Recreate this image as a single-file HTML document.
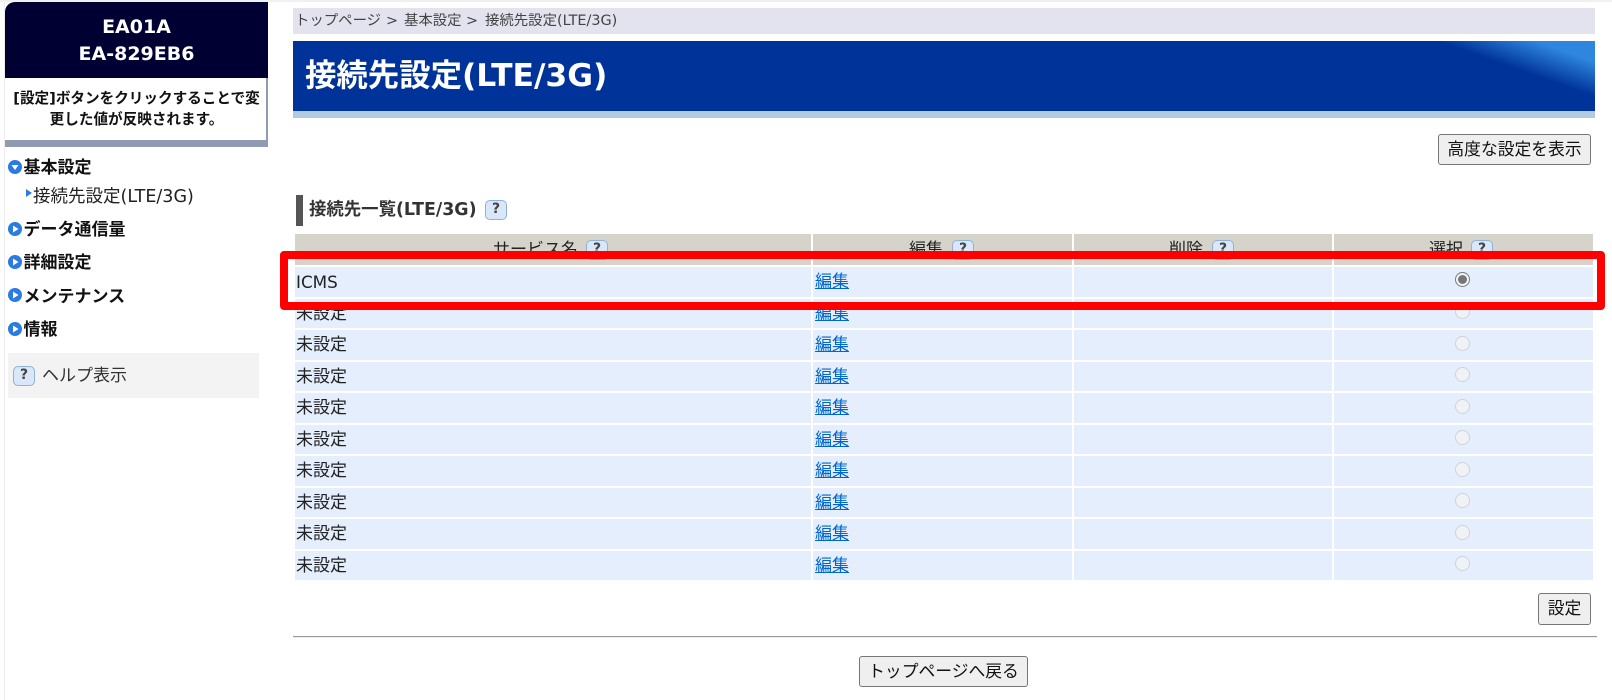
<!DOCTYPE html>
<html lang="ja">
<head>
<meta charset="utf-8">
<title>接続先設定(LTE/3G)</title>
<style>
html,body{margin:0;padding:0;background:#fff}
body{width:1612px;height:700px;position:relative;overflow:hidden;font-family:"DejaVu Sans","Noto Sans CJK JP",sans-serif;color:#222}
div,a,span,svg{position:absolute;display:block;white-space:nowrap}
.box{box-sizing:border-box}
.nav{left:23.5px;font-size:17px;font-weight:700;line-height:24px;color:#111}
.ic{left:8px;width:14px;height:14px}
.hdr{top:234px;height:31px;background:#d6d3cb}
.cell{height:29.5px;background:#e4eefd}
.t{font-size:17px;line-height:24px;color:#222}
.lnk{font-size:17px;line-height:24px;color:#0066cc;text-decoration:underline;left:815px}
.r{left:1454.5px;width:15px;height:15px;box-sizing:border-box;border:1.5px solid #d2d2d2;border-radius:50%;background:#eff3f8}
.btn{box-sizing:border-box;background:#efefef;border:1px solid #767676;border-radius:3px;font-size:16.8px;color:#111;text-align:center}
.q{width:22px;height:20px;box-sizing:border-box;background:#d9e7f8;border:1.5px solid #8fb2d8;border-radius:5px;color:#444;font-size:14px;font-weight:700;line-height:17px;text-align:center}
</style>
</head>
<body>
<div style="left:0;top:0;width:1612px;height:2px;background:#f0f0f0"></div>
<div style="left:4px;top:2px;width:1px;height:698px;background:#ececec"></div>

<!-- sidebar header -->
<div style="left:5px;top:2px;width:263px;height:76px;background:#000033;border-radius:10px 0 0 0"></div>
<div style="left:5px;top:14px;width:263px;text-align:center;color:#fff;font-size:19px;font-weight:700;line-height:26px">EA01A</div>
<div style="left:5px;top:41px;width:263px;text-align:center;color:#fff;font-size:19px;font-weight:700;line-height:26px">EA-829EB6</div>
<div style="left:5px;top:78px;width:263px;height:69px;background:#8f9bb3"></div>
<div style="left:5px;top:78px;width:261px;height:62px;background:#fff"></div>
<div style="left:5px;top:88px;width:263px;text-align:center;font-size:14.6px;font-weight:700;line-height:22px;color:#111">[設定]ボタンをクリックすることで変</div>
<div style="left:5px;top:109px;width:263px;text-align:center;font-size:14.6px;font-weight:700;line-height:22px;color:#111">更した値が反映されます。</div>

<!-- nav -->
<svg class="ic" style="top:160px" viewBox="0 0 14 14"><circle cx="7" cy="7" r="7" fill="#2b7be0"/><path d="M3.5 5H10.5L7 10Z" fill="#fff"/></svg>
<div class="nav" style="top:156px">基本設定</div>
<svg style="left:26px;top:189px;width:6px;height:8px" viewBox="0 0 6 8"><path d="M0 0L6 4L0 8Z" fill="#2b7be0"/></svg>
<div class="t" style="left:33px;top:185px;color:#222;font-size:17.5px">接続先設定(LTE/3G)</div>
<svg class="ic" style="top:222px" viewBox="0 0 14 14"><circle cx="7" cy="7" r="7" fill="#2b7be0"/><path d="M5 3.5V10.5L10.5 7Z" fill="#fff"/></svg>
<div class="nav" style="top:218px">データ通信量</div>
<svg class="ic" style="top:255px" viewBox="0 0 14 14"><circle cx="7" cy="7" r="7" fill="#2b7be0"/><path d="M5 3.5V10.5L10.5 7Z" fill="#fff"/></svg>
<div class="nav" style="top:251px">詳細設定</div>
<svg class="ic" style="top:288px" viewBox="0 0 14 14"><circle cx="7" cy="7" r="7" fill="#2b7be0"/><path d="M5 3.5V10.5L10.5 7Z" fill="#fff"/></svg>
<div class="nav" style="top:285px">メンテナンス</div>
<svg class="ic" style="top:322px" viewBox="0 0 14 14"><circle cx="7" cy="7" r="7" fill="#2b7be0"/><path d="M5 3.5V10.5L10.5 7Z" fill="#fff"/></svg>
<div class="nav" style="top:318px">情報</div>
<div style="left:8px;top:353px;width:251px;height:45px;background:#f3f3f3"></div>
<div class="q" style="left:13px;top:366px">?</div>
<div class="t" style="left:42px;top:364px;color:#333">ヘルプ表示</div>

<!-- breadcrumb -->
<div style="left:293px;top:8px;width:1302px;height:26px;background:#e3e3ef"></div>
<div style="left:295px;top:10px;font-size:14.4px;line-height:22px;color:#444">トップページ</div>
<div style="left:386px;top:10px;font-size:14.4px;line-height:22px;color:#444">&gt;</div>
<div style="left:404px;top:10px;font-size:14.4px;line-height:22px;color:#444">基本設定</div>
<div style="left:466px;top:10px;font-size:14.4px;line-height:22px;color:#444">&gt;</div>
<div style="left:485px;top:10px;font-size:14.4px;line-height:22px;color:#444">接続先設定(LTE/3G)</div>

<!-- banner -->
<div style="left:293px;top:41px;width:1302px;height:70px;background:linear-gradient(19.5deg,#003399 89.5%,#2e86de 96%)"></div>
<div style="left:293px;top:111px;width:1302px;height:7px;background:#b3cbe0"></div>
<div style="left:305px;top:55px;font-size:31.4px;font-weight:700;line-height:42px;color:#fff">接続先設定(LTE/3G)</div>

<div class="btn" style="left:1438px;top:134px;width:153px;height:31px;line-height:29px">高度な設定を表示</div>

<!-- section -->
<div style="left:296px;top:195px;width:7px;height:31px;background:#555"></div>
<div style="left:309px;top:198px;font-size:17.4px;font-weight:700;line-height:24px;color:#333">接続先一覧(LTE/3G)</div>
<div class="q" style="left:485px;top:200px">?</div>

<!-- table header -->
<div class="hdr" style="left:295px;width:516px"></div>
<div class="hdr" style="left:813px;width:259px"></div>
<div class="hdr" style="left:1074px;width:258px"></div>
<div class="hdr" style="left:1334px;width:259px"></div>
<div class="t" style="left:493px;top:238px">サービス名</div><div class="q" style="left:586px;top:240px">?</div>
<div class="t" style="left:909px;top:238px">編集</div><div class="q" style="left:952px;top:240px">?</div>
<div class="t" style="left:1169px;top:238px">削除</div><div class="q" style="left:1212px;top:240px">?</div>
<div class="t" style="left:1429px;top:238px">選択</div><div class="q" style="left:1471px;top:240px">?</div>

<!-- rows -->
<div class="cell" style="left:295px;top:267px;width:516px"></div><div class="cell" style="left:813px;top:267px;width:259px"></div><div class="cell" style="left:1074px;top:267px;width:258px"></div><div class="cell" style="left:1334px;top:267px;width:259px"></div>
<div class="cell" style="left:295px;top:298.5px;width:516px"></div><div class="cell" style="left:813px;top:298.5px;width:259px"></div><div class="cell" style="left:1074px;top:298.5px;width:258px"></div><div class="cell" style="left:1334px;top:298.5px;width:259px"></div>
<div class="cell" style="left:295px;top:330px;width:516px"></div><div class="cell" style="left:813px;top:330px;width:259px"></div><div class="cell" style="left:1074px;top:330px;width:258px"></div><div class="cell" style="left:1334px;top:330px;width:259px"></div>
<div class="cell" style="left:295px;top:361.5px;width:516px"></div><div class="cell" style="left:813px;top:361.5px;width:259px"></div><div class="cell" style="left:1074px;top:361.5px;width:258px"></div><div class="cell" style="left:1334px;top:361.5px;width:259px"></div>
<div class="cell" style="left:295px;top:393px;width:516px"></div><div class="cell" style="left:813px;top:393px;width:259px"></div><div class="cell" style="left:1074px;top:393px;width:258px"></div><div class="cell" style="left:1334px;top:393px;width:259px"></div>
<div class="cell" style="left:295px;top:424.5px;width:516px"></div><div class="cell" style="left:813px;top:424.5px;width:259px"></div><div class="cell" style="left:1074px;top:424.5px;width:258px"></div><div class="cell" style="left:1334px;top:424.5px;width:259px"></div>
<div class="cell" style="left:295px;top:456px;width:516px"></div><div class="cell" style="left:813px;top:456px;width:259px"></div><div class="cell" style="left:1074px;top:456px;width:258px"></div><div class="cell" style="left:1334px;top:456px;width:259px"></div>
<div class="cell" style="left:295px;top:487.5px;width:516px"></div><div class="cell" style="left:813px;top:487.5px;width:259px"></div><div class="cell" style="left:1074px;top:487.5px;width:258px"></div><div class="cell" style="left:1334px;top:487.5px;width:259px"></div>
<div class="cell" style="left:295px;top:519px;width:516px"></div><div class="cell" style="left:813px;top:519px;width:259px"></div><div class="cell" style="left:1074px;top:519px;width:258px"></div><div class="cell" style="left:1334px;top:519px;width:259px"></div>
<div class="cell" style="left:295px;top:550.5px;width:516px"></div><div class="cell" style="left:813px;top:550.5px;width:259px"></div><div class="cell" style="left:1074px;top:550.5px;width:258px"></div><div class="cell" style="left:1334px;top:550.5px;width:259px"></div>

<div class="t" style="left:296px;top:270px;font-size:16.8px">ICMS</div>
<div class="t" style="left:296px;top:302px">未設定</div>
<div class="t" style="left:296px;top:333px">未設定</div>
<div class="t" style="left:296px;top:365px">未設定</div>
<div class="t" style="left:296px;top:396px">未設定</div>
<div class="t" style="left:296px;top:428px">未設定</div>
<div class="t" style="left:296px;top:459px">未設定</div>
<div class="t" style="left:296px;top:491px">未設定</div>
<div class="t" style="left:296px;top:522px">未設定</div>
<div class="t" style="left:296px;top:554px">未設定</div>

<a class="lnk" style="top:270px">編集</a>
<a class="lnk" style="top:302px">編集</a>
<a class="lnk" style="top:333px">編集</a>
<a class="lnk" style="top:365px">編集</a>
<a class="lnk" style="top:396px">編集</a>
<a class="lnk" style="top:428px">編集</a>
<a class="lnk" style="top:459px">編集</a>
<a class="lnk" style="top:491px">編集</a>
<a class="lnk" style="top:522px">編集</a>
<a class="lnk" style="top:554px">編集</a>

<div class="r" style="top:272px;border-color:#7a7a7a;background:#f2f5f9"></div>
<div style="left:1457.5px;top:275px;width:9px;height:9px;border-radius:50%;background:#777"></div>
<div class="r" style="top:304px"></div>
<div class="r" style="top:336px"></div>
<div class="r" style="top:367px"></div>
<div class="r" style="top:399px"></div>
<div class="r" style="top:430px"></div>
<div class="r" style="top:462px"></div>
<div class="r" style="top:493px"></div>
<div class="r" style="top:525px"></div>
<div class="r" style="top:556px"></div>

<!-- red highlight -->
<div class="box" style="left:280px;top:251px;width:1325px;height:59px;border:8px solid #ff0000;border-radius:4px"></div>

<!-- footer controls -->
<div class="btn" style="left:1538px;top:593px;width:53px;height:32px;line-height:29px">設定</div>
<div style="left:293px;top:636px;width:1304px;height:1px;background:#999"></div>
<div style="left:293px;top:637px;width:1304px;height:1px;background:#eee"></div>
<div class="btn" style="left:859px;top:656px;width:169px;height:31px;line-height:29px">トップページへ戻る</div>
</body>
</html>
